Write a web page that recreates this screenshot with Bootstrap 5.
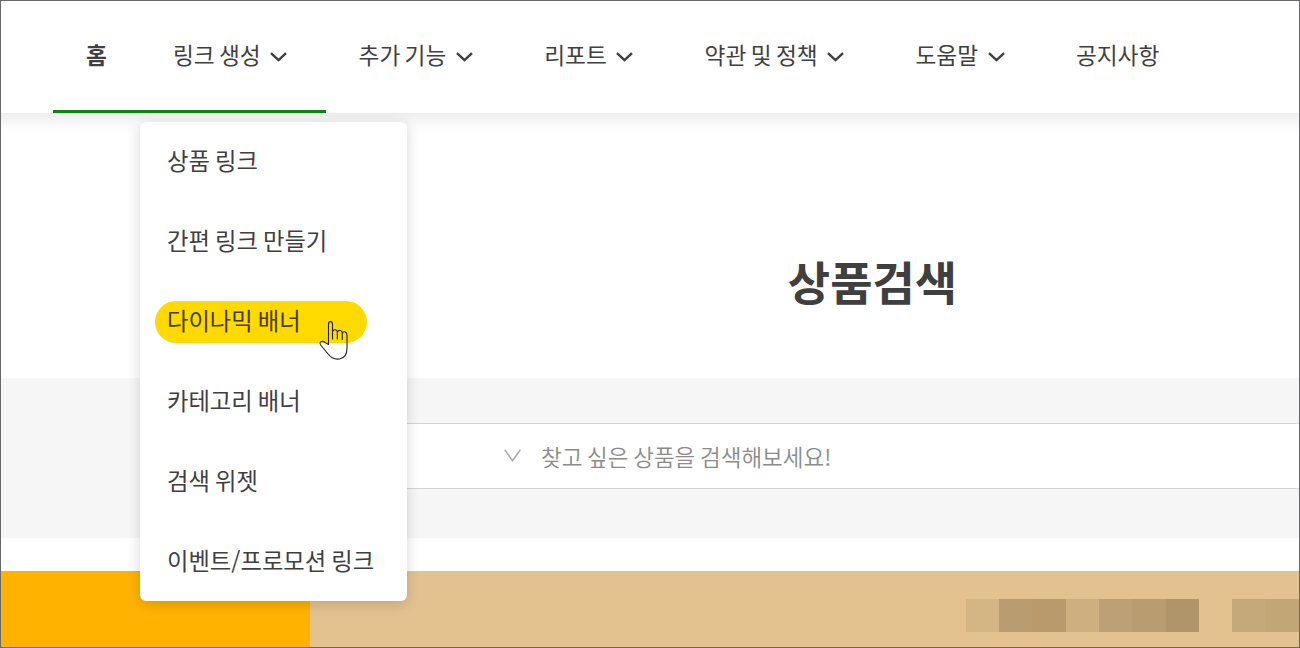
<!DOCTYPE html>
<html lang="ko">
<head>
<meta charset="utf-8">
<title>상품검색</title>
<meta name="viewport" content="width=device-width, initial-scale=1">
<link href="https://cdn.jsdelivr.net/npm/bootstrap@5.3.0/dist/css/bootstrap.min.css" rel="stylesheet">
<style>
body{font-family:"Noto Sans CJK KR",sans-serif;color:#3f3f3f;background:#fff}
.page-frame{height:648px;border:1px solid #68676a}
.topbar{height:113px;padding:0 0 0 71.5px;border-bottom:1px solid #ececec;box-shadow:0 4px 18px rgba(0,0,0,.1);position:relative;z-index:2;background:#fff;margin:0 -20px}
.topbar .nav-link{height:112px;padding:0 38px 2px 33px;color:#3f3f3f;font-size:22.7px;line-height:34px;word-spacing:-2px;gap:10px;border-bottom:3px solid transparent;white-space:nowrap}
.topbar .nav-link.home{padding-left:33.5px;font-weight:700}
.topbar .nav-link.home{padding-right:33px}
.topbar .nav-link.current{border-color:#0b850f}
.topbar svg{margin-top:4px;margin-left:-.5px;margin-right:.3px}
.submenu{top:120.5px;left:138.5px;width:267px;height:479px;border-radius:6px;box-shadow:0 3px 14px rgba(0,0,0,.16);z-index:3;padding:19px 15px;background:#fff}
.submenu a{display:block;width:fit-content;height:42px;line-height:38px;margin-bottom:38px;padding:0 12px 0 12.5px;color:#3f3f3f;font-size:23.3px;word-spacing:-1.4px;text-decoration:none;white-space:nowrap}
.submenu a.picked{width:212px;border-radius:21px;background:#ffda00;color:#443c08}
.hand{left:179px;top:198px}
.hero{height:264px;padding:0 0 0 445px}
.hero h1{font-size:46px;font-weight:700;line-height:70px;margin:131px 0 0;color:#3f3f3f}
.search-band{height:160px;background:#f6f6f6;padding:45px 0 0 340px}
.search-box{height:66px;border:solid #d4d4d4;border-width:1.5px 0;background:#fff;padding-left:163px;gap:20px;font-size:22.5px;font-weight:350;word-spacing:-1.6px;color:#8b8b8b}
.search-box span{padding-top:2px}
.search-box svg{margin-top:-1px}
.promo{height:76px;margin-top:33px;background:#e4c290}
.promo-start{width:309px;background:#ffb300}
.tiles{margin:28px 0 0 656px;height:33px}
.tiles span{width:33.33px}
</style>
</head>
<body>
<div class="page-frame position-relative overflow-hidden">
  <header class="topbar">
    <nav class="nav flex-nowrap">
      <a class="nav-link home current d-flex align-items-center" href="#">홈</a>
      <a class="nav-link current d-flex align-items-center" href="#">링크 생성<svg width="17" height="10" viewBox="0 0 17 10" fill="none" stroke="#3f3f3f" stroke-width="2.4"><path d="M1 1.2 8.5 8.2 16 1.2"/></svg></a>
      <a class="nav-link d-flex align-items-center" href="#">추가 기능<svg width="17" height="10" viewBox="0 0 17 10" fill="none" stroke="#3f3f3f" stroke-width="2.4"><path d="M1 1.2 8.5 8.2 16 1.2"/></svg></a>
      <a class="nav-link d-flex align-items-center" href="#">리포트<svg width="17" height="10" viewBox="0 0 17 10" fill="none" stroke="#3f3f3f" stroke-width="2.4"><path d="M1 1.2 8.5 8.2 16 1.2"/></svg></a>
      <a class="nav-link d-flex align-items-center" href="#">약관 및 정책<svg width="17" height="10" viewBox="0 0 17 10" fill="none" stroke="#3f3f3f" stroke-width="2.4"><path d="M1 1.2 8.5 8.2 16 1.2"/></svg></a>
      <a class="nav-link d-flex align-items-center" href="#">도움말<svg width="17" height="10" viewBox="0 0 17 10" fill="none" stroke="#3f3f3f" stroke-width="2.4"><path d="M1 1.2 8.5 8.2 16 1.2"/></svg></a>
      <a class="nav-link d-flex align-items-center" href="#">공지사항</a>
    </nav>
  </header>

  <div class="submenu position-absolute">
    <a href="#">상품 링크</a>
    <a href="#">간편 링크 만들기</a>
    <a href="#" class="picked">다이나믹 배너</a>
    <a href="#">카테고리 배너</a>
    <a href="#">검색 위젯</a>
    <a href="#">이벤트/프로모션 링크</a>
    <svg class="hand position-absolute" width="30" height="40" viewBox="0 0 30 40" fill="none" stroke="#222" stroke-width="1.1" stroke-linejoin="round" stroke-linecap="round"><path d="M9.5 24.5V4.2C9.5.8 13.5.8 13.5 4.2V19M13.5 11.5C14.5 9 18.3 9.2 18.3 12V19M18.3 12C19.5 9.6 23.3 10 23.3 13V19.5M23.3 13C24.5 10.8 28 11.5 28 15V28C28 42 14.5 41.5 8.7 33.5L1.7 25C-.5 21.5 3.5 20.5 6 22.5L9.5 24.5"/></svg>
  </div>

  <main>
    <section class="hero d-flex justify-content-center align-items-start"><h1>상품검색</h1></section>
    <section class="search-band">
      <div class="search-box d-flex align-items-center">
        <svg width="17" height="13" viewBox="0 0 17 13" fill="none" stroke="#aaa" stroke-width="1.5"><path d="M.7.7 8.5 11.8 16.3.7"/></svg>
        <span>찾고 싶은 상품을 검색해보세요!</span>
      </div>
    </section>
    <section class="promo d-flex">
      <div class="promo-start"></div>
      <div class="tiles d-flex">
        <span style="background:#d4b684"></span><span style="background:#b99c70"></span><span style="background:#b89a6c"></span><span style="background:#ceb080"></span><span style="background:#bda076"></span><span style="background:#b99c70"></span><span style="background:#b0956a"></span><span></span><span style="background:#c6a97a"></span><span style="background:#c2a676"></span>
      </div>
    </section>
  </main>
</div>
<script src="https://cdn.jsdelivr.net/npm/bootstrap@5.3.0/dist/js/bootstrap.bundle.min.js"></script>
</body>
</html>
